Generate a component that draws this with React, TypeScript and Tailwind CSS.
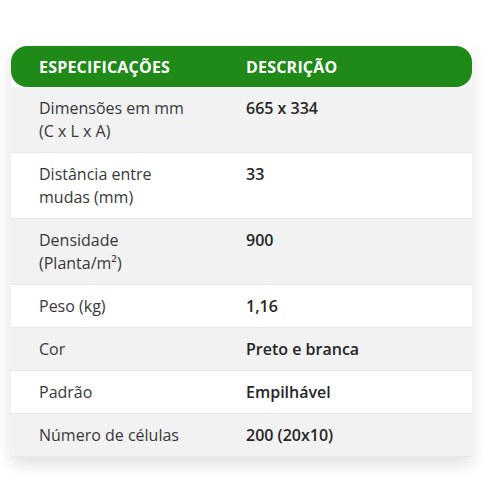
const rows: { label: string[]; value: string }[] = [
  { label: ["Dimensões em mm", "(C x L x A)"], value: "665 x 334" },
  { label: ["Distância entre", "mudas (mm)"], value: "33" },
  { label: ["Densidade", "(Planta/m²)"], value: "900" },
  { label: ["Peso (kg)"], value: "1,16" },
  { label: ["Cor"], value: "Preto e branca" },
  { label: ["Padrão"], value: "Empilhável" },
  { label: ["Número de células"], value: "200 (20x10)" },
];

export default function App() {
  return (
    <div className="w-[490px] h-[490px] bg-white pt-[46px] px-[11px] font-['Open_Sans',sans-serif] text-[#383838]">
      <div className="w-[461px] shadow-[0_8px_16px_rgba(0,0,0,0.12)]">
        <div className="grid grid-cols-[207px_1fr] h-[41px] items-center rounded-2xl bg-[#1f8a17] text-white text-[16px] font-bold tracking-[0.2px]">
          <div className="pl-[28px]">ESPECIFICAÇÕES</div>
          <div className="pl-[28px]">DESCRIÇÃO</div>
        </div>
        {rows.map((r, i) => (
          <div
            key={r.value}
            className={
              "grid grid-cols-[207px_1fr] py-[9.5px] text-[16px] leading-[23px] border-b border-[#e8e8e8] " +
              (i % 2 === 0 ? "bg-[#f2f2f2]" : "bg-white")
            }
          >
            <div className="pl-[28px] whitespace-nowrap">
              {r.label.map((l) => (
                <div key={l}>{l}</div>
              ))}
            </div>
            <div className="pl-[28px] font-semibold text-[#262626]">{r.value}</div>
          </div>
        ))}
      </div>
    </div>
  );
}
